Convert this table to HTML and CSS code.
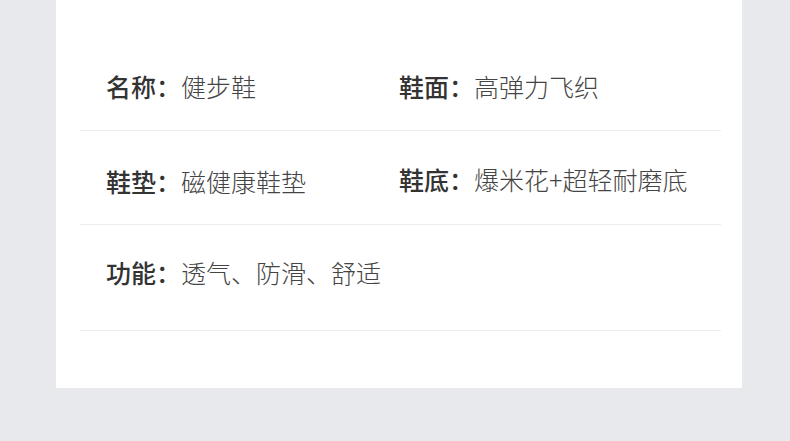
FILE: index.html
```html
<!DOCTYPE html>
<html lang="zh-CN">
<head>
<meta charset="utf-8">
<title>商品参数</title>
<link rel="stylesheet" href="styles.css">
</head>
<body>
<div class="card">
  <div class="specs">
    <div class="row row-1">
      <div class="item"><span class="label">名称：</span><span class="value">健步鞋</span></div>
      <div class="item"><span class="label">鞋面：</span><span class="value">高弹力飞织</span></div>
    </div>
    <div class="row row-2">
      <div class="item item-low"><span class="label">鞋垫：</span><span class="value">磁健康鞋垫</span></div>
      <div class="item"><span class="label">鞋底：</span><span class="value">爆米花+超轻耐磨底</span></div>
    </div>
    <div class="row row-3">
      <div class="item"><span class="label">功能：</span><span class="value">透气、防滑、舒适</span></div>
    </div>
  </div>
</div>
</body>
</html>
```

FILE: styles.css
```css
html, body {
  margin: 0;
  padding: 0;
  background: #e8e9ec;
  font-family: "Noto Sans CJK SC", "Noto Sans", sans-serif;
}

.card {
  margin-left: 56px;
  width: 686px;
  height: 388px;
  background: #ffffff;
  box-sizing: border-box;
  padding: 0 21px 0 24px;
}

.specs {
  display: flex;
  flex-direction: column;
}

.row {
  display: grid;
  grid-template-columns: 293px 1fr;
  padding-left: 26px;
  border-bottom: 1px solid #ececec;
  font-size: 25px;
  line-height: 25px;
}

.row-1 {
  padding-top: 74px;
  padding-bottom: 31px;
}

.row-2 {
  padding-top: 36px;
  padding-bottom: 32px;
}

.row-3 {
  padding-top: 35px;
  padding-bottom: 45px;
}

.item {
  display: flex;
  white-space: nowrap;
}

.item-low {
  position: relative;
  top: 2px;
}

.label {
  color: #333333;
  font-weight: 500;
}

.value {
  color: #444444;
  font-weight: 300;
}
```
